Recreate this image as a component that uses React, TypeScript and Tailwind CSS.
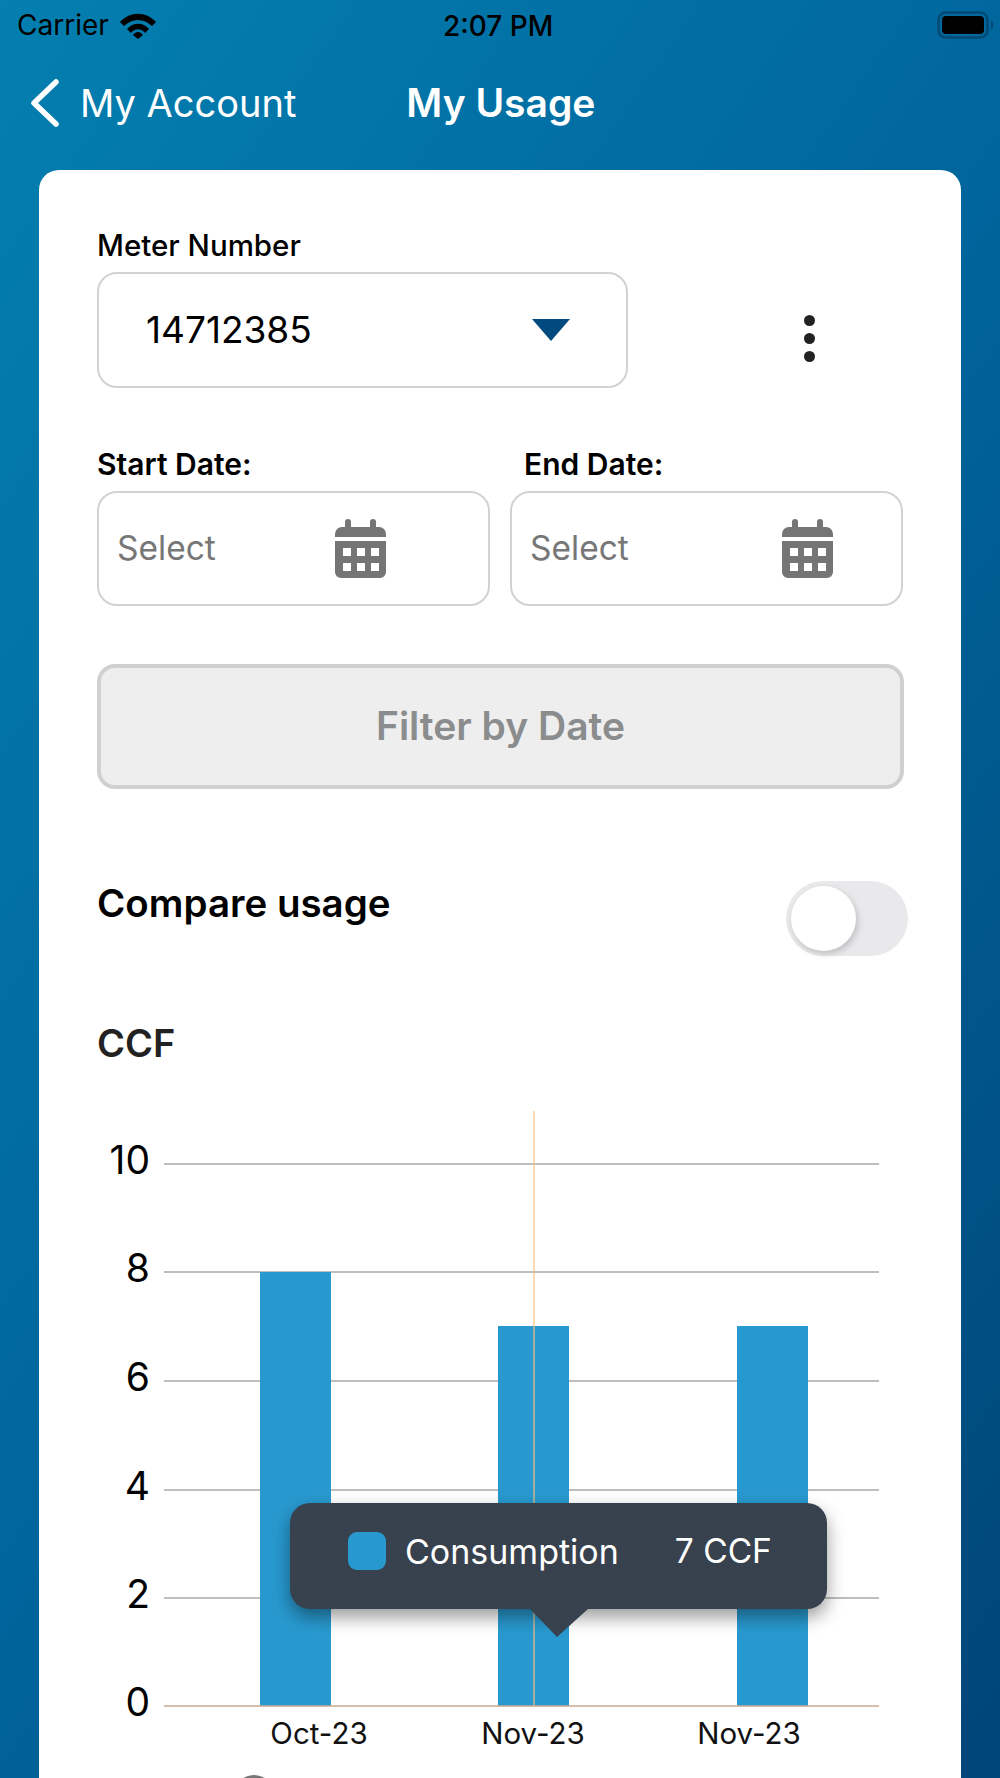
function Wifi() {
  return (
    <svg width="38" height="28" viewBox="0 0 38 28" className="ml-[10px]">
      <path d="M1 11 C11 0 27 0 37 11 L33 15 C25 7 13 7 5 15 Z" fill="#000" />
      <path d="M8 18 C14 11 24 11 30 18 L26 22 C22 17 16 17 12 22 Z" fill="#000" />
      <path d="M14 24 C17 20 21 20 24 24 L19 28 Z" fill="#000" />
    </svg>
  );
}

function Battery() {
  return (
    <svg width="60" height="28" viewBox="0 0 60 28">
      <rect x="1.5" y="1.5" width="49" height="25" rx="7" fill="none" stroke="#004a75" strokeWidth="2.5" />
      <rect x="5" y="5" width="42" height="18" rx="4" fill="#000" />
      <path d="M54 9 C57 10 57 18 54 19 Z" fill="#004a75" />
    </svg>
  );
}

function CalendarIcon() {
  return (
    <svg width="51" height="59" viewBox="0 0 51 59">
      <path d="M10 3 a3 3 0 0 1 6 0 V8 H35 V3 a3 3 0 0 1 6 0 V8 H44 a7 7 0 0 1 7 7 V18 H0 V15 a7 7 0 0 1 7 -7 H10 Z" fill="#757575" />
      <path fillRule="evenodd" fill="#757575" d="M0 22 H51 V53 a6 6 0 0 1 -6 6 H6 a6 6 0 0 1 -6 -6 Z M8 29 v8 h8 v-8 Z M22 29 v8 h8 v-8 Z M36 29 v8 h8 v-8 Z M8 44 v8 h8 v-8 Z M22 44 v8 h8 v-8 Z M36 44 v8 h8 v-8 Z" />
    </svg>
  );
}

function DateField({ className }: { className: string }) {
  return (
    <div className={`flex h-[115px] w-[393px] items-center justify-between rounded-[20px] border-2 border-[#d2d2d2] pl-[18px] ${className}`}>
      <span className="text-[33.5px] text-[#777777]">Select</span>
      <CalendarIcon />
    </div>
  );
}

// page coordinates are kept in the viewBox so the numbers read off the screenshot
const gridLines = [
  { label: '10', y: 1163 },
  { label: '8', y: 1271 },
  { label: '6', y: 1380 },
  { label: '4', y: 1489 },
  { label: '2', y: 1597 },
];

const bars = [
  { x: 260, top: 1271 },
  { x: 498, top: 1325 },
  { x: 737, top: 1325 },
];

const monthLabels = [
  { label: 'Oct-23', x: 319 },
  { label: 'Nov-23', x: 533 },
  { label: 'Nov-23', x: 749 },
];

function UsageChart() {
  return (
    <div className="relative h-[678px] w-[922px]">
      <svg width="922" height="678" viewBox="39 1100 922 678" className="block">
        {gridLines.map((g) => (
          <g key={g.y}>
            <line x1="164" x2="879" y1={g.y} y2={g.y} stroke="#a9a9a9" strokeWidth="1.5" />
            <text x="150" y={g.y + 10} textAnchor="end" fontSize="39" fill="#000">
              {g.label}
            </text>
          </g>
        ))}
        <text x="150" y="1715" textAnchor="end" fontSize="39" fill="#000">
          0
        </text>
        {bars.map((b) => (
          <rect key={b.x} x={b.x} y={b.top} width="71" height={1705 - b.top} fill="#2899cf" />
        ))}
        <line x1="164" x2="879" y1="1705" y2="1705" stroke="#c9a88f" strokeWidth="1.5" />
        <line x1="534" x2="534" y1="1110" y2="1705" stroke="#f7c080" strokeWidth="1.2" />
        {monthLabels.map((m, i) => (
          <text key={i} x={m.x} y="1743" textAnchor="middle" fontSize="29.5" fill="#111">
            {m.label}
          </text>
        ))}
        <circle cx="254" cy="1794" r="20" fill="#777" />
      </svg>

      {/* tooltip sits over the chart */}
      <div className="absolute left-[251px] top-[402px] flex h-[106px] w-[537px] items-center rounded-[20px] bg-[#38424e] pb-[10px] pl-[58px] text-[34px] text-white shadow-[0_8px_18px_rgba(0,0,0,0.4)]">
        <span className="h-[38px] w-[38px] rounded-[9px] bg-[#2899cf]" />
        <span className="ml-[19px]">Consumption</span>
        <span className="ml-[56px] text-[33.5px]">7 CCF</span>
        <svg width="58" height="28" viewBox="0 0 58 28" className="absolute left-[240px] top-[106px]">
          <path d="M0 0 H58 L27 28 Z" fill="#38424e" />
        </svg>
      </div>
    </div>
  );
}

export default function App() {
  return (
    <div className="h-[1778px] w-[1000px] overflow-hidden bg-[linear-gradient(125deg,#047fb0_0%,#00659c_50%,#004577_100%)] font-['Inter',sans-serif]">
      {/* status bar */}
      <div className="relative flex h-[50px] items-center justify-between pl-[17px] pr-[3px]">
        <div className="flex items-center text-[28px] text-black">
          Carrier
          <Wifi />
        </div>
        <span className="absolute left-[443px] top-[5px] text-[28px] font-medium text-black">2:07 PM</span>
        <Battery />
      </div>

      {/* nav */}
      <div className="flex h-[106px] items-center pl-[31px] text-[38px] text-white">
        <svg width="28" height="48" viewBox="0 0 28 48">
          <path d="M25 3 L3 24 L25 45" fill="none" stroke="#fff" strokeWidth="5.5" strokeLinecap="round" strokeLinejoin="round" />
        </svg>
        <span className="ml-[21px]">My Account</span>
        <span className="ml-[110px] text-[39px] font-semibold">My Usage</span>
      </div>

      {/* card */}
      <div className="ml-[39px] mt-[14px] h-[1700px] w-[922px] rounded-t-[20px] bg-white">
        <div className="pl-[58px] pt-[59px]">
          <div className="text-[29.5px] font-medium leading-[32px] text-black">Meter Number</div>
          <div className="mt-[11px] flex items-center">
            <div className="flex h-[116px] w-[531px] items-center justify-between rounded-[20px] border-2 border-[#d2d2d2] pl-[47px] pr-[56px]">
              <span className="text-[37px] text-black">14712385</span>
              <svg width="38" height="22" viewBox="0 0 38 22">
                <path d="M0 0 H38 L19 22 Z" fill="#004a80" />
              </svg>
            </div>
            <div className="ml-[176px] mt-[17px] flex flex-col gap-[7px]">
              <span className="h-[11px] w-[11px] rounded-full bg-[#222222]" />
              <span className="h-[11px] w-[11px] rounded-full bg-[#222222]" />
              <span className="h-[11px] w-[11px] rounded-full bg-[#222222]" />
            </div>
          </div>

          <div className="mt-[60px] flex text-[30px] font-semibold leading-[32px] text-black">
            <span className="w-[427px]">Start Date:</span>
            <span>End Date:</span>
          </div>
          <div className="mt-[11px] flex gap-[20px]">
            <DateField className="pr-[102px]" />
            <DateField className="pr-[68px]" />
          </div>

          <div className="mt-[58px] flex h-[125px] w-[807px] items-center justify-center rounded-[18px] border-[4px] border-[#d0d0d0] bg-[#eeeeee] text-[39px] font-semibold text-[#8a8c8e]">
            Filter by Date
          </div>

          <div className="mt-[92px] flex h-[76px] w-[811px] items-start justify-between">
            <span className="text-[38.5px] font-semibold leading-[44px] text-black">Compare usage</span>
            <div className="flex h-[75px] w-[122px] items-center rounded-full bg-[#e9e9eb] pl-[5px]">
              <span className="h-[65px] w-[65px] rounded-full bg-white shadow-[2px_3px_6px_rgba(0,0,0,0.18)]" />
            </div>
          </div>

          <div className="mt-[64px] text-[38px] font-semibold leading-[44px] text-[#222222]">CCF</div>
        </div>
        <div className="mt-[36px]">
          <UsageChart />
        </div>
      </div>
    </div>
  );
}
